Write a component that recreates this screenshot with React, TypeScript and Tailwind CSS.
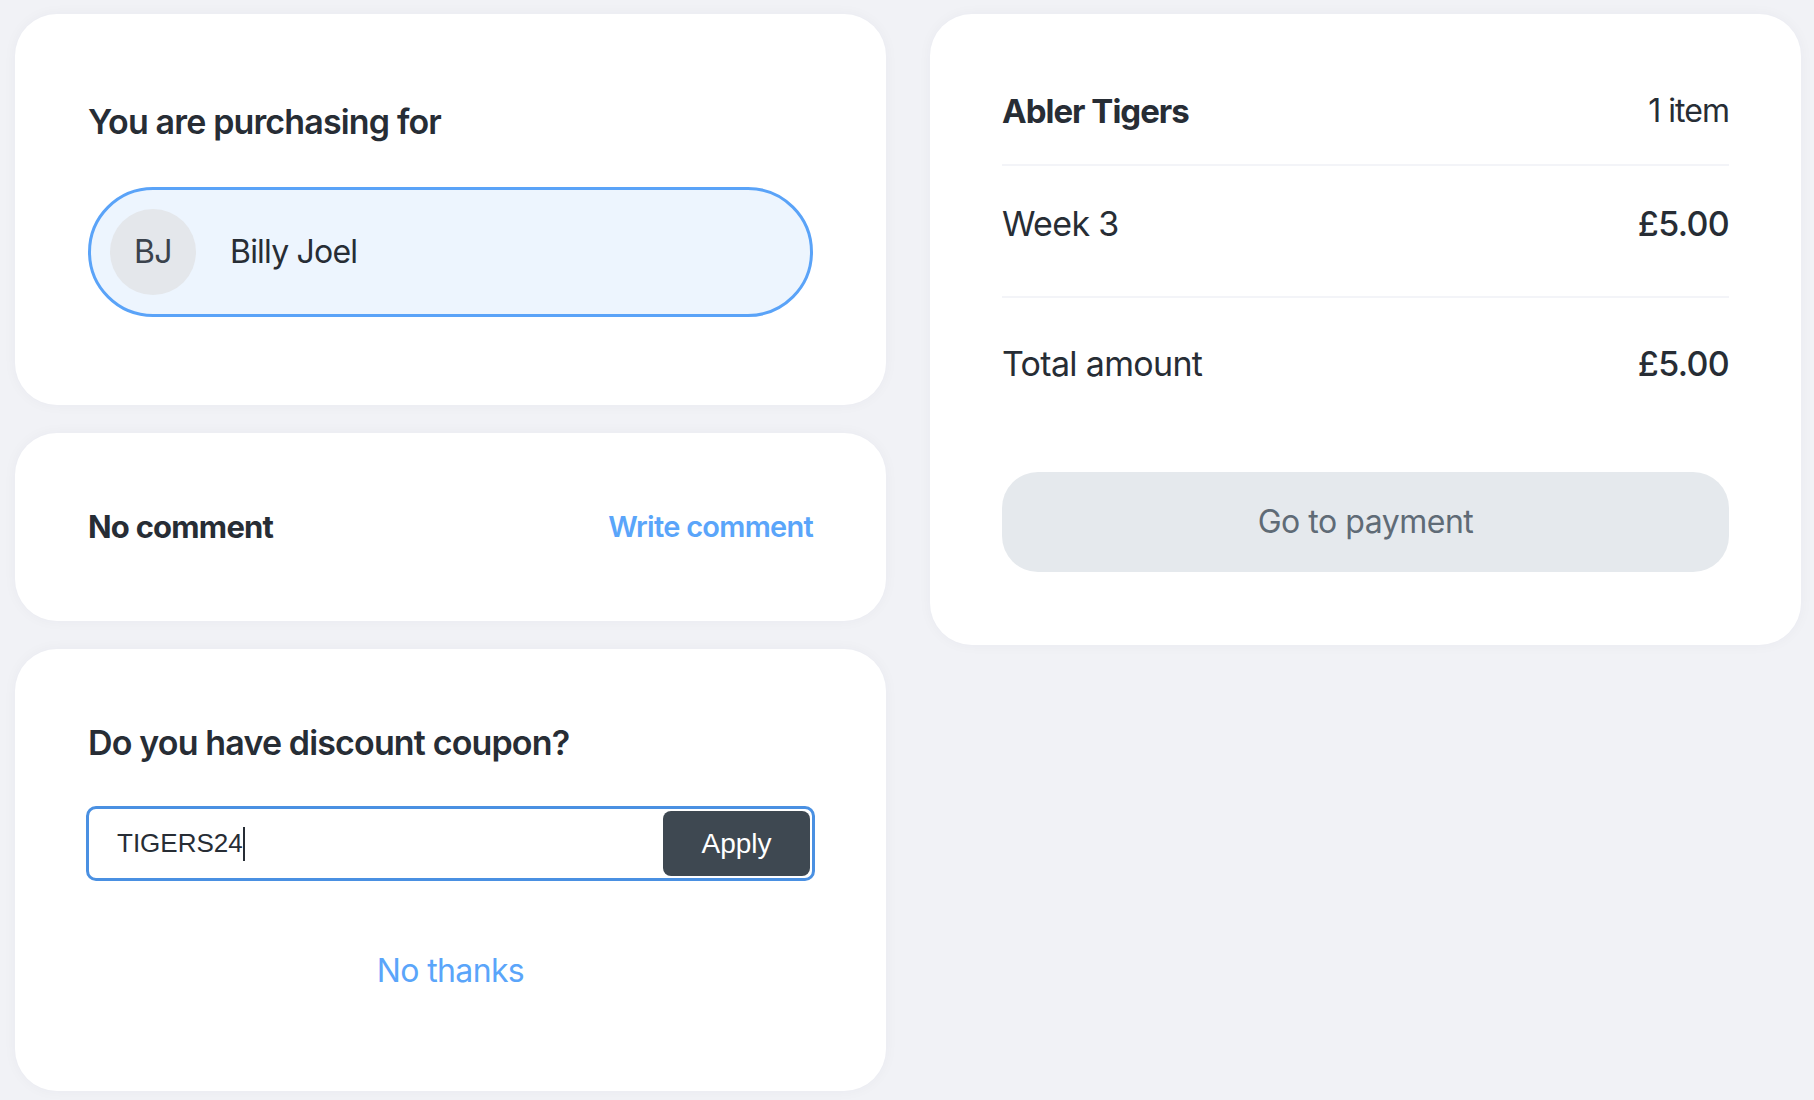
import { useState } from "react";

// ── Checkout summary ────────────────────────────────

const FONT = "font-['Inter',_'Noto_Sans',_sans-serif]";

function Card({ className = "", children }: { className?: string; children: React.ReactNode }) {
  return (
    <div className={`bg-white rounded-[42px] shadow-[0_0_14px_rgba(30,40,70,0.04)] ${className}`}>
      {children}
    </div>
  );
}

export default function App() {
  const [coupon] = useState("TIGERS24");

  return (
    <div className={`min-h-[1100px] w-[1814px] bg-[#f1f2f6] text-[#272d35] ${FONT}`}>
      <div className="grid grid-cols-[871px_871px] gap-[44px] pl-[15px] pt-[14px] items-start">
        {/* Left column */}
        <div className="flex flex-col gap-[28px]">
          {/* Purchasing for */}
          <Card className="px-[73px] pt-[88px] pb-[88px]">
            <h2 className="text-[34px] leading-[40px] font-semibold tracking-[-0.025em]">
              You are purchasing for
            </h2>
            <div className="mt-[45px] h-[130px] rounded-full border-[3px] border-[#5aa3f8] bg-[#edf5fe] flex items-center pl-[19px]">
              <div className="w-[86px] h-[86px] rounded-full bg-[#e4e7eb] flex items-center justify-center text-[32px] text-[#3b434c] tracking-[-0.02em]">
                BJ
              </div>
              <span className="ml-[34px] text-[32px] leading-[40px] tracking-[-0.025em]">Billy Joel</span>
            </div>
          </Card>

          {/* Comment */}
          <Card className="h-[188px] px-[73px] flex items-center justify-between">
            <span className="text-[31px] leading-[40px] font-bold tracking-[-0.025em]">No comment</span>
            <button className="text-[29px] leading-[40px] font-semibold text-[#5aa5fa] tracking-[-0.025em]">
              Write comment
            </button>
          </Card>

          {/* Coupon */}
          <Card className="px-[71px] pt-[74px] pb-[100px]">
            <h2 className="px-[2px] text-[34px] leading-[40px] font-semibold tracking-[-0.025em]">
              Do you have discount coupon?
            </h2>
            <div className="mt-[43px] h-[75px] rounded-[10px] border-[3px] border-[#4a90e2] flex items-center p-[2px]">
              <div className="flex-1 flex items-center pl-[26px] font-['Liberation_Sans',_Arial,_sans-serif] text-[26px] text-[#272d35]">
                <span>{coupon}</span>
                <span className="w-[2px] h-[34px] bg-[#272d35]" />
              </div>
              <button className="h-full w-[147px] rounded-[8px] bg-[#3e4851] text-white text-[28px] font-['Liberation_Sans',_Arial,_sans-serif]">
                Apply
              </button>
            </div>
            <div className="mt-[70px] text-center">
              <button className="text-[32px] leading-[40px] text-[#5aa5fa] tracking-[-0.02em]">No thanks</button>
            </div>
          </Card>
        </div>

        {/* Right column: order summary */}
        <Card className="px-[72px] pt-[77px] pb-[73px]">
          <div className="flex items-center justify-between pb-[33px] border-b-2 border-[#f3f4f8]">
            <span className="text-[33px] leading-[40px] font-bold tracking-[-0.03em]">Abler Tigers</span>
            <span className="text-[32px] leading-[40px] tracking-[-0.03em]">1 item</span>
          </div>
          <div className="flex items-center justify-between pt-[38px] pb-[52px] border-b-2 border-[#f3f4f8]">
            <span className="text-[34px] leading-[40px] tracking-[-0.02em]">Week 3</span>
            <span className="text-[34px] leading-[40px] font-medium tracking-[-0.02em]">£5.00</span>
          </div>
          <div className="flex items-center justify-between pt-[46px]">
            <span className="text-[34px] leading-[40px] tracking-[-0.02em]">Total amount</span>
            <span className="text-[34px] leading-[40px] font-medium tracking-[-0.02em]">£5.00</span>
          </div>
          <button className="mt-[88px] w-full h-[100px] rounded-[36px] bg-[#e5e9ed] text-[#5f6b76] text-[32px] tracking-[-0.015em]">
            Go to payment
          </button>
        </Card>
      </div>
    </div>
  );
}
